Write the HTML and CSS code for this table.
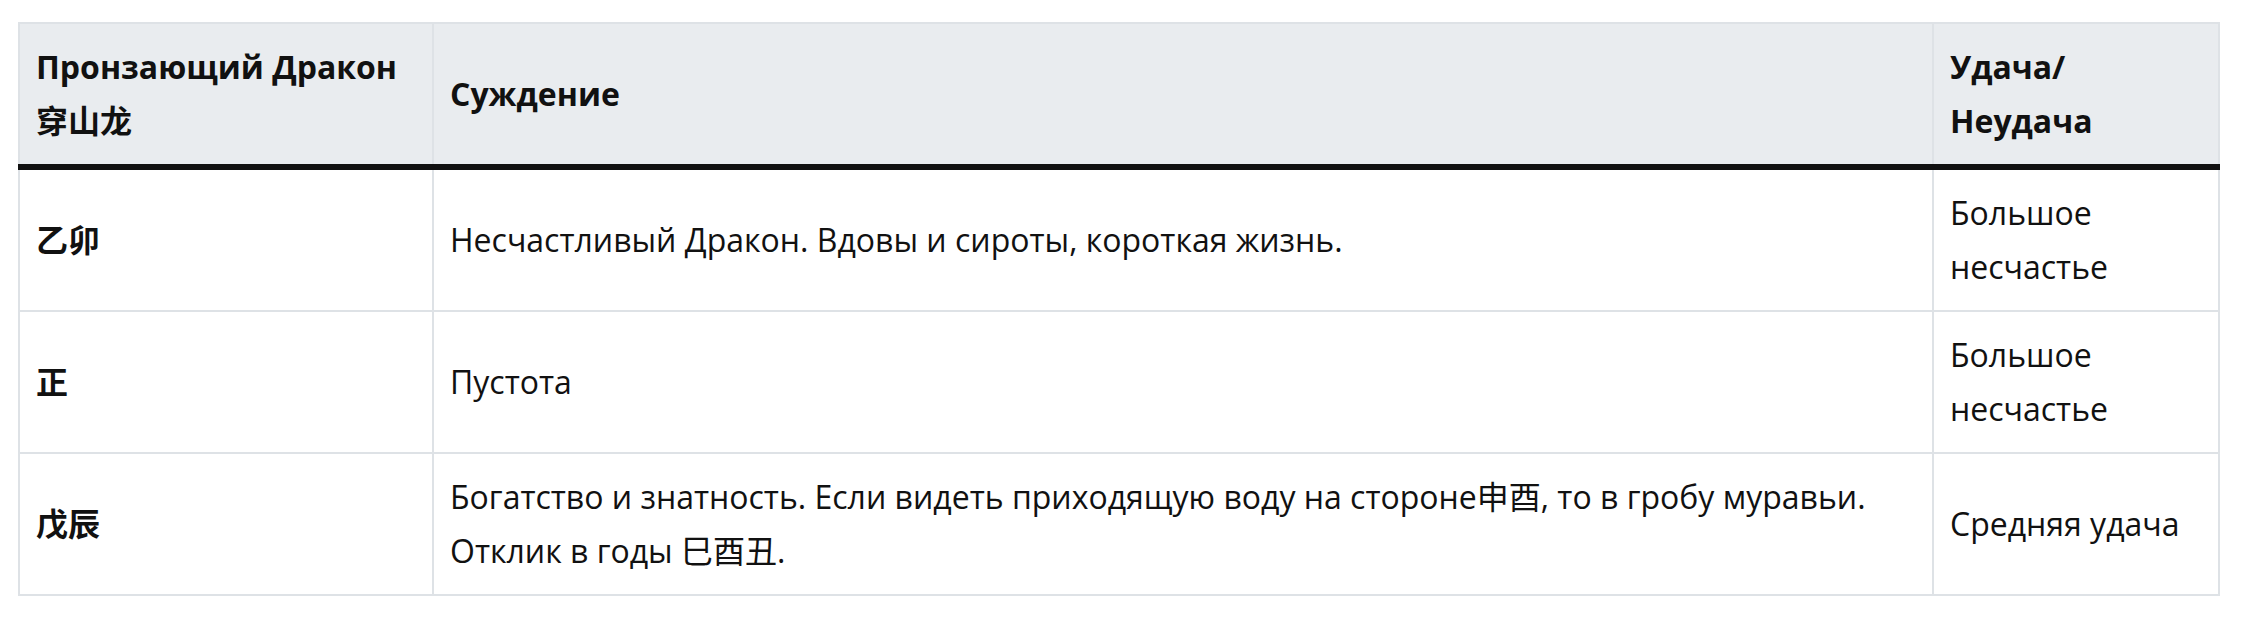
FILE: index.html
```html
<!DOCTYPE html>
<html lang="ru">
<head>
<meta charset="utf-8">
<title>Пронзающий Дракон</title>
<link rel="stylesheet" href="styles.css">
</head>
<body>
<div class="page">
  <table class="dragon-table">
    <colgroup>
      <col class="col-name">
      <col class="col-judgement">
      <col class="col-luck">
    </colgroup>
    <thead>
      <tr>
        <th>Пронзающий Дракон<br>穿山龙</th>
        <th>Суждение</th>
        <th>Удача/<br>Неудача</th>
      </tr>
    </thead>
    <tbody>
      <tr>
        <th scope="row">乙卯</th>
        <td>Несчастливый Дракон. Вдовы и сироты, короткая жизнь.</td>
        <td>Большое несчастье</td>
      </tr>
      <tr>
        <th scope="row">正</th>
        <td>Пустота</td>
        <td>Большое несчастье</td>
      </tr>
      <tr>
        <th scope="row">戊辰</th>
        <td>Богатство и знатность. Если видеть приходящую воду на стороне申酉, то в гробу муравьи. Отклик в годы 巳酉丑.</td>
        <td>Средняя удача</td>
      </tr>
    </tbody>
  </table>
</div>
</body>
</html>
```

FILE: styles.css
```css
html, body {
  margin: 0;
  padding: 0;
  background: #ffffff;
}

body {
  font-family: "Open Sans", "Noto Sans", "Noto Sans CJK SC", sans-serif;
  font-size: 32px;
  line-height: 54px;
  color: #111111;
}

.page {
  padding: 22px 30px 0 18px;
}

.dragon-table {
  width: 100%;
  border-collapse: collapse;
  table-layout: fixed;
  border: 2px solid #dee2e6;
}

.col-name { width: 414px; }
.col-judgement { width: 1500px; }
.col-luck { width: 286px; }

.dragon-table th,
.dragon-table td {
  border: 2px solid #dee2e6;
  padding: 16px 16px;
  text-align: left;
  vertical-align: middle;
}

.dragon-table th {
  font-weight: 700;
}

.dragon-table thead th {
  background: #e9ecef;
  border-bottom: 6px solid #111111;
}

.dragon-table td {
  font-weight: 400;
}
```
